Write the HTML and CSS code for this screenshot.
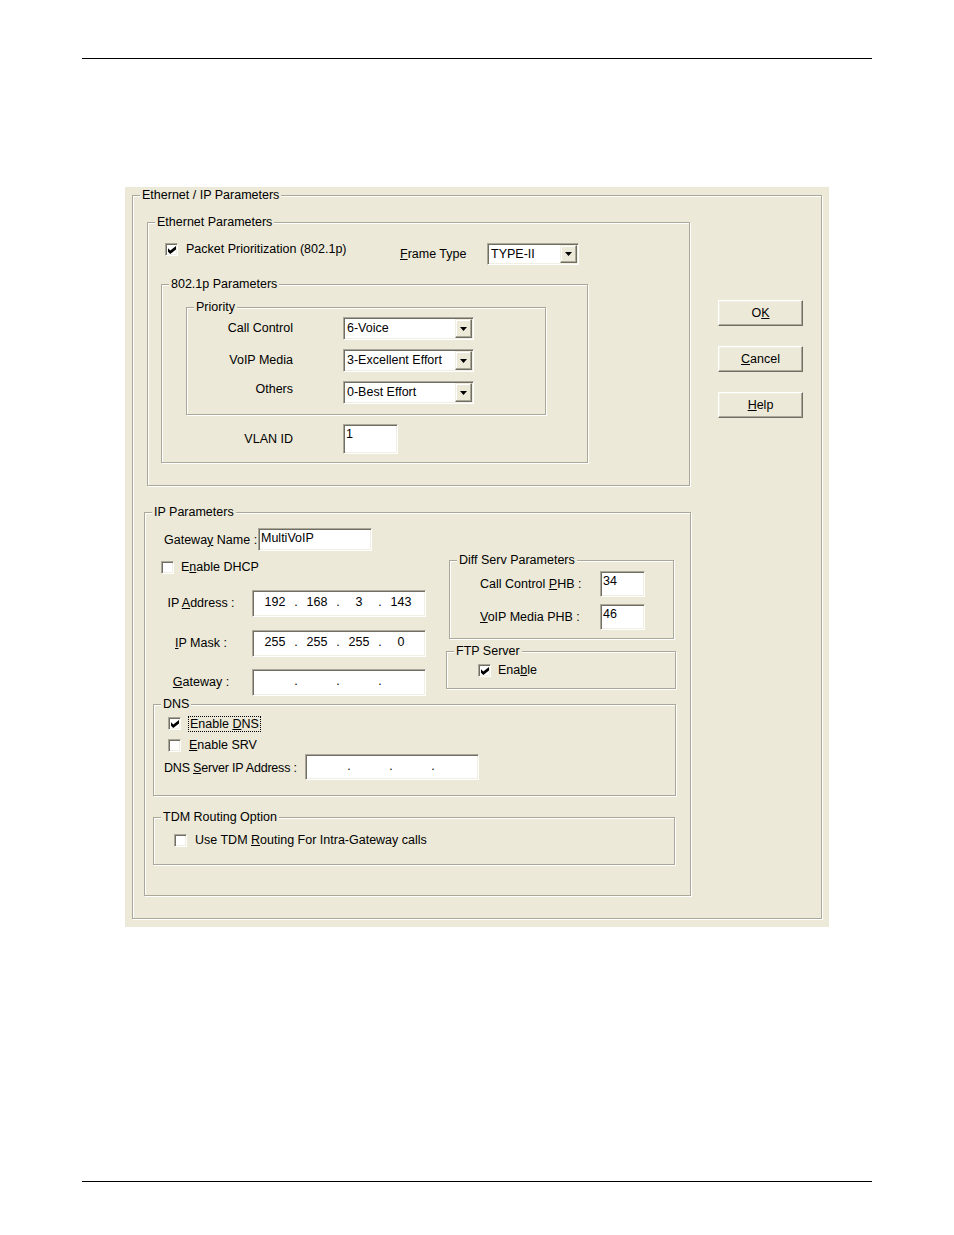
FILE: index.html
```html
<!DOCTYPE html>
<html lang="en">
<head>
  <meta charset="UTF-8">
  <meta name="viewport" content="width=device-width, initial-scale=1.0">
  <title>Ethernet / IP Parameters</title>
  <link rel="stylesheet" href="styles.css">
</head>
<body>
  <div class="rule rule-top"></div>

  <div class="panel">
    <fieldset class="gb gb-outer">
      <legend>Ethernet / IP Parameters</legend>
      <div class="outer-body">

        <div class="left-col">
          <fieldset class="gb gb-eth">
            <legend>Ethernet Parameters</legend>
            <div class="eth-body">
              <div class="eth-top">
                <div class="check-line packet-line">
                  <span class="cb"><svg width="8" height="8" viewBox="0 0 7 7"><polygon points="0,2 2,4 7,0 7,3 2,7 0,5"/></svg></span>
                  <span>Packet Prioritization (802.1p)</span>
                </div>
                <span class="frame-label"><u>F</u>rame Type</span>
                <div class="combo combo-frame">
                  <span class="combo-text">TYPE-II</span>
                  <span class="combo-btn"><svg width="7" height="4" viewBox="0 0 7 4"><path d="M0 0h7L3.5 4z"/></svg></span>
                </div>
              </div>

              <fieldset class="gb gb-dot1p">
                <legend>802.1p Parameters</legend>
                <div class="dot1p-body">
                  <fieldset class="gb gb-priority">
                    <legend>Priority</legend>
                    <div class="prio-grid">
                      <span class="prio-label">Call Control</span>
                      <div class="combo combo-prio">
                        <span class="combo-text">6-Voice</span>
                        <span class="combo-btn"><svg width="7" height="4" viewBox="0 0 7 4"><path d="M0 0h7L3.5 4z"/></svg></span>
                      </div>
                      <span class="prio-label">VoIP Media</span>
                      <div class="combo combo-prio">
                        <span class="combo-text">3-Excellent Effort</span>
                        <span class="combo-btn"><svg width="7" height="4" viewBox="0 0 7 4"><path d="M0 0h7L3.5 4z"/></svg></span>
                      </div>
                      <span class="prio-label prio-label-low">Others</span>
                      <div class="combo combo-prio">
                        <span class="combo-text">0-Best Effort</span>
                        <span class="combo-btn"><svg width="7" height="4" viewBox="0 0 7 4"><path d="M0 0h7L3.5 4z"/></svg></span>
                      </div>
                    </div>
                  </fieldset>

                  <div class="vlan-row">
                    <span class="vlan-label">VLAN ID</span>
                    <span class="field field-vlan">1</span>
                  </div>
                </div>
              </fieldset>
            </div>
          </fieldset>

          <fieldset class="gb gb-ip">
            <legend>IP Parameters</legend>
            <div class="ip-body">
              <div class="ip-top">
                <div class="ip-left">
                  <div class="gwname-row">
                    <span class="gwname-label">Gatewa<u>y</u> Name :</span>
                    <span class="field field-gwname">MultiVoIP</span>
                  </div>
                  <div class="check-line dhcp-line">
                    <span class="cb"></span>
                    <span>E<u>n</u>able DHCP</span>
                  </div>
                  <div class="addr-row addr-first">
                    <span class="addr-label">IP <u>A</u>ddress :</span>
                    <div class="field ipfield">
                      <span class="oct">192</span><span class="dot">.</span><span class="oct">168</span><span class="dot">.</span><span class="oct">3</span><span class="dot">.</span><span class="oct">143</span>
                    </div>
                  </div>
                  <div class="addr-row addr-mask">
                    <span class="addr-label"><u>I</u>P Mask :</span>
                    <div class="field ipfield">
                      <span class="oct">255</span><span class="dot">.</span><span class="oct">255</span><span class="dot">.</span><span class="oct">255</span><span class="dot">.</span><span class="oct">0</span>
                    </div>
                  </div>
                  <div class="addr-row addr-gw">
                    <span class="addr-label"><u>G</u>ateway :</span>
                    <div class="field ipfield">
                      <span class="oct"></span><span class="dot">.</span><span class="oct"></span><span class="dot">.</span><span class="oct"></span><span class="dot">.</span><span class="oct"></span>
                    </div>
                  </div>
                </div>

                <div class="ip-right">
                  <fieldset class="gb gb-diff">
                    <legend>Diff Serv Parameters</legend>
                    <div class="diff-grid">
                      <span>Call Control <u>P</u>HB :</span>
                      <span class="field field-phb">34</span>
                      <span><u>V</u>oIP Media PHB :</span>
                      <span class="field field-phb">46</span>
                    </div>
                  </fieldset>
                  <fieldset class="gb gb-ftp">
                    <legend>FTP Server</legend>
                    <div class="check-line ftp-line">
                      <span class="cb"><svg width="8" height="8" viewBox="0 0 7 7"><polygon points="0,2 2,4 7,0 7,3 2,7 0,5"/></svg></span>
                      <span>Ena<u>b</u>le</span>
                    </div>
                  </fieldset>
                </div>
              </div>

              <fieldset class="gb gb-dns">
                <legend>DNS</legend>
                <div class="dns-body">
                  <div class="check-line dns-line">
                    <span class="cb"><svg width="8" height="8" viewBox="0 0 7 7"><polygon points="0,2 2,4 7,0 7,3 2,7 0,5"/></svg></span>
                    <span class="focus">Enable <u>D</u>NS</span>
                  </div>
                  <div class="check-line srv-line">
                    <span class="cb"></span>
                    <span><u>E</u>nable SRV</span>
                  </div>
                  <div class="dns-row">
                    <span class="dns-label">DNS <u>S</u>erver IP Address :</span>
                    <div class="field ipfield">
                      <span class="oct"></span><span class="dot">.</span><span class="oct"></span><span class="dot">.</span><span class="oct"></span><span class="dot">.</span><span class="oct"></span>
                    </div>
                  </div>
                </div>
              </fieldset>

              <fieldset class="gb gb-tdm">
                <legend>TDM Routing Option</legend>
                <div class="tdm-body">
                  <div class="check-line tdm-line">
                    <span class="cb"></span>
                    <span>Use TDM <u>R</u>outing For Intra-Gateway calls</span>
                  </div>
                </div>
              </fieldset>
            </div>
          </fieldset>
        </div>

        <div class="button-col">
          <div class="btn">O<u>K</u></div>
          <div class="btn"><u>C</u>ancel</div>
          <div class="btn"><u>H</u>elp</div>
        </div>

      </div>
    </fieldset>
  </div>

  <div class="rule rule-bottom"></div>
</body>
</html>
```

FILE: styles.css
```css
* {
  margin: 0;
  padding: 0;
  box-sizing: border-box;
}

body {
  font-family: "Liberation Sans", Arial, sans-serif;
  font-size: 12.5px;
  line-height: 15px;
  color: #000;
  background: #fff;
}

u {
  text-decoration: underline;
  text-underline-offset: 1px;
}

.rule {
  width: 790px;
  height: 1px;
  margin-left: 82px;
  background: #000;
}

.rule-top {
  margin-top: 58px;
}

.rule-bottom {
  margin-top: 254px;
}

.panel {
  width: 704px;
  margin: 128px 0 0 125px;
  padding: 1px 7px 8px 7px;
  background: #ece9d8;
}

/* etched group boxes */
.gb {
  margin: 0;
  padding: 0;
  min-width: 0;
  border: 1px solid #aca899;
  box-shadow: inset 1px 1px 0 #fff, 1px 1px 0 #fff;
}

.gb > legend {
  margin-left: 7px;
  padding: 0 2px;
  height: 15px;
  line-height: 15px;
  background: #ece9d8;
}

.gb-outer {
  width: 690px;
}

.outer-body {
  display: flex;
  padding: 12px 0 22px 0;
}

.left-col {
  width: 558px;
}

.button-col {
  margin-left: 27px;
  padding-top: 85px;
  display: flex;
  flex-direction: column;
  gap: 20px;
}

/* controls */
.cb {
  width: 13px;
  height: 13px;
  flex: none;
  display: inline-flex;
  align-items: center;
  justify-content: center;
  background: #fff;
  border: 1px solid;
  border-color: #aca899 #fff #fff #aca899;
  box-shadow: inset 1px 1px 0 #716f64, inset -1px -1px 0 #f1efe2;
}

.cb svg {
  margin: 1px 0 0 1px;
}

.check-line {
  display: flex;
  align-items: center;
  height: 13px;
  gap: 7px;
  white-space: nowrap;
}

.field {
  display: block;
  background: #fff;
  border: 1px solid;
  border-color: #aca899 #fff #fff #aca899;
  box-shadow: inset 1px 1px 0 #716f64, inset -1px -1px 0 #f1efe2;
  padding: 2px 2px;
  white-space: nowrap;
}

.combo {
  display: flex;
  padding: 1px;
  background: #fff;
  border: 1px solid;
  border-color: #aca899 #fff #fff #aca899;
  box-shadow: inset 1px 1px 0 #716f64, inset -1px -1px 0 #f1efe2;
}

.combo-text {
  flex: 1;
  padding-left: 2px;
  display: flex;
  align-items: center;
  white-space: nowrap;
}

.combo-btn {
  width: 17px;
  display: flex;
  align-items: center;
  justify-content: center;
  background: #ece9d8;
  border: 1px solid;
  border-color: #f1efe2 #716f64 #716f64 #f1efe2;
  box-shadow: inset -1px -1px 0 #aca899, inset 1px 1px 0 #fff;
}

.btn {
  width: 85px;
  height: 26px;
  display: flex;
  align-items: center;
  justify-content: center;
  background: #ece9d8;
  border: 1px solid;
  border-color: #fff #716f64 #716f64 #fff;
  box-shadow: inset -1px -1px 0 #aca899, inset 1px 1px 0 #f1efe2;
}

/* Ethernet parameters */
.gb-eth {
  width: 543px;
  margin-left: 14px;
}

.eth-body {
  padding: 13px 0 22px 0;
}

.eth-top {
  display: flex;
  align-items: flex-start;
  margin-left: 17px;
}

.packet-line {
  width: 235px;
  gap: 8px;
}

.frame-label {
  width: 87px;
  line-height: 22px;
}

.combo-frame {
  width: 92px;
  height: 22px;
}

.gb-dot1p {
  width: 427px;
  margin: 12px 0 0 13px;
}

.dot1p-body {
  padding: 8px 0 8px 0;
}

.gb-priority {
  width: 360px;
  margin-left: 24px;
}

.prio-grid {
  display: grid;
  grid-template-columns: 106px 131px;
  grid-auto-rows: 23px;
  column-gap: 50px;
  row-gap: 9px;
  padding: 2px 0 10px 0;
}

.prio-label {
  align-self: center;
  text-align: right;
}

.prio-label-low {
  align-self: start;
  padding-top: 1px;
}

.vlan-row {
  display: grid;
  grid-template-columns: 131px 55px;
  column-gap: 50px;
  align-items: center;
  margin-top: 9px;
}

.vlan-label {
  text-align: right;
}

.field-vlan {
  height: 30px;
}

/* IP parameters */
.gb-ip {
  width: 547px;
  margin: 19px 0 0 11px;
}

.ip-body {
  padding-bottom: 30px;
}

.ip-top {
  display: flex;
}

.ip-left {
  width: 304px;
  padding-top: 8px;
}

.gwname-row {
  display: flex;
  align-items: center;
  margin-left: 19px;
}

.gwname-label {
  width: 94px;
  padding-top: 2px;
  white-space: nowrap;
}

.field-gwname {
  width: 114px;
  height: 23px;
  padding-top: 2px;
}

.dhcp-line {
  margin: 10px 0 0 16px;
}

.addr-row {
  display: grid;
  grid-template-columns: 78px 174px;
  column-gap: 12px;
  align-items: center;
  margin-left: 17px;
}

.addr-first {
  margin-top: 16px;
}

.addr-mask {
  margin-top: 13px;
}

.addr-gw {
  margin-top: 12px;
}

.addr-label {
  text-align: center;
  white-space: nowrap;
}

.ipfield {
  display: flex;
  align-items: center;
  width: 174px;
  height: 27px;
  padding: 0 0 2px 5px;
}

.oct {
  width: 34px;
  text-align: center;
}

.dot {
  width: 8px;
  text-align: center;
}

.ip-right {
  padding-top: 33px;
}

.gb-diff {
  width: 225px;
}

.diff-grid {
  display: grid;
  grid-template-columns: 120px 45px;
  grid-auto-rows: 26px;
  row-gap: 7px;
  align-items: center;
  padding: 3px 0 8px 30px;
  white-space: nowrap;
}

.field-phb {
  height: 26px;
}

.gb-ftp {
  width: 230px;
  margin: 5px 0 0 -3px;
}

.ftp-line {
  margin: 5px 0 11px 31px;
}

.gb-dns {
  width: 523px;
  margin: 1px 0 0 8px;
}

.dns-body {
  padding: 5px 0 15px 0;
}

.dns-line {
  margin-left: 14px;
}

.focus {
  border: 1px dotted #000;
  padding: 0 1px;
  line-height: 14px;
}

.srv-line {
  margin: 9px 0 0 14px;
  gap: 8px;
}

.dns-row {
  display: flex;
  align-items: center;
  margin: 2px 0 0 10px;
}

.dns-row .ipfield {
  height: 26px;
}

.dns-label {
  width: 141px;
  padding-top: 3px;
  white-space: nowrap;
  letter-spacing: -0.2px;
}

.gb-tdm {
  width: 522px;
  margin: 14px 0 0 8px;
}

.tdm-body {
  padding: 9px 0 17px 20px;
}

.tdm-line {
  gap: 8px;
}
```
